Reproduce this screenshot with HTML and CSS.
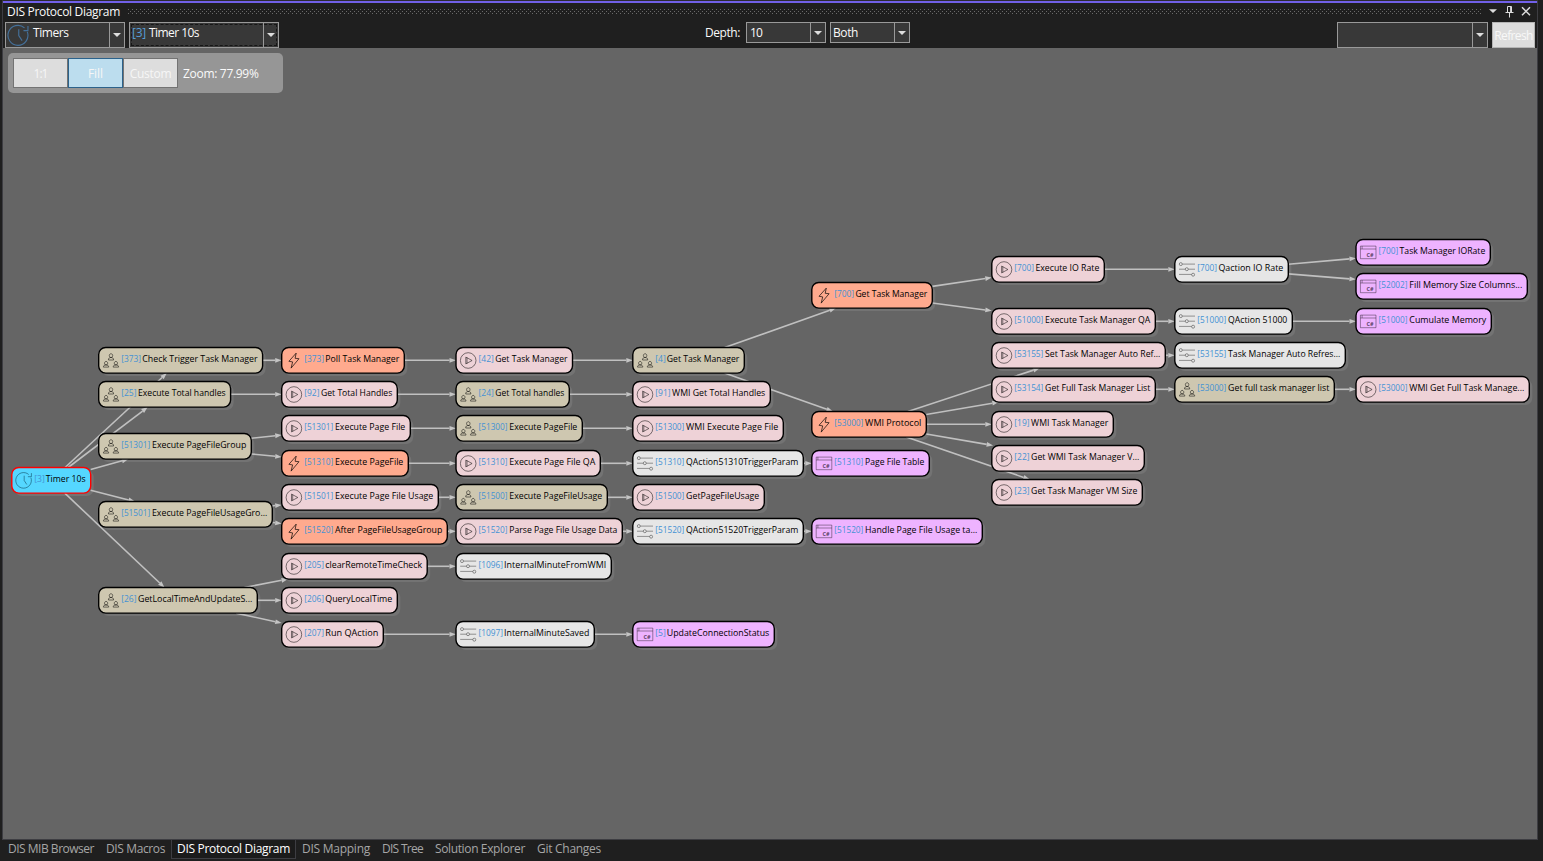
FILE: index.html
```html
<!DOCTYPE html>
<html lang="en">
<head>
<meta charset="utf-8">
<title>DIS Protocol Diagram</title>
<link rel="stylesheet" href="styles.css">
</head>
<body>
<svg class="defs" aria-hidden="true">
  <symbol id="timer" viewBox="0 0 18 18">
    <path d="M15.9 6.2A7.8 7.8 0 1 1 13.7 3M9.2 4.2V9l2.6 4M16.4 1.6v3.6h-3.5"/>
  </symbol>
  <symbol id="group" viewBox="0 0 18 18">
    <path d="M9.1 2.2a1.7 1.9 0 1 1-.01 0zM6.5 8.5c0-1.9 1-2.5 2.6-2.5s2.6.6 2.6 2.5zM4.2 9.9a1.6 1.8 0 1 1-.01 0zM1.5 15.6c0-1.6 1-2.2 2.6-2.2s2.7.6 2.7 2.2zM14 9.9a1.6 1.8 0 1 1-.01 0zM11.3 15.6c0-1.6 1-2.2 2.7-2.2s2.7.6 2.7 2.2z"/>
  </symbol>
  <symbol id="bolt" viewBox="0 0 18 18">
    <path d="M11.3 1.6 4 9.8l3.7.6-1.5 6.2 7.9-9.4-3.9-.4z"/>
  </symbol>
  <symbol id="play" viewBox="0 0 18 18">
    <circle cx="9" cy="9" r="7.8"/><path d="M6.6 5.6v6.8L12.9 9zM7.8 6v6"/>
  </symbol>
  <symbol id="param" viewBox="0 0 18 18">
    <path d="M4.4 3.6H17M1 8.7h6.2M10.4 8.7H17M1 13.9h12.5"/>
    <circle cx="2.8" cy="3.6" r="1.5"/><circle cx="8.8" cy="8.7" r="1.5"/><circle cx="15.1" cy="14.2" r="1.5"/>
  </symbol>
  <symbol id="code" viewBox="0 0 18 18">
    <path d="M1.2 2.6h15.6v12.6H1.2zM1.2 5.5h15.6M2.9 2.6v2.8"/>
  </symbol>
</svg>
<div class="window">
  <header class="titlebar">
    <span class="title" data-w="113">DIS Protocol Diagram</span>
    <span class="grip"></span>
    <svg class="title-icons" viewBox="0 0 50 18">
      <path class="solid" d="M2 7.2h8L6 11z"/>
      <path d="M20.5 4.5h4v6h-4zM23.6 4.5v6M18.5 10.5h8M22.5 10.5v5"/>
      <path class="cross" d="M35 5.2 43 13.2M43 5.2 35 13.2"/>
    </svg>
  </header>
  <div class="toolbar">
    <div class="left">
      <div class="combo tall timers"><svg class="combo-icon"><use href="#timer"/></svg><span class="value" data-w="35.5">Timers</span><i class="drop"></i></div>
      <div class="combo tall focused"><span class="value"><b data-w="14">[3]</b><span data-w="50">Timer 10s</span></span><i class="drop"></i></div>
    </div>
    <div class="middle">
      <span class="depth" data-w="35">Depth:</span>
      <div class="combo"><span class="value" data-w="12">10</span><i class="drop"></i></div>
      <div class="combo"><span class="value both" data-w="25">Both</span><i class="drop"></i></div>
    </div>
    <div class="right">
      <div class="combo tall search"><span class="value"></span><i class="drop"></i></div>
      <button class="refresh"><span data-w="38.5">Refresh</span></button>
    </div>
  </div>
  <main class="canvas">
    <svg class="diagram" id="diagram" viewBox="3 48 1534 791"></svg>
    <div class="zoombar">
      <button><span data-w="14">1:1</span></button><button class="active"><span data-w="15">Fill</span></button><button><span data-w="41.5">Custom</span></button>
      <span class="zoom" data-w="75.5">Zoom: 77.99%</span>
    </div>
  </main>
</div>
<nav class="tabs">
  <span><em data-w="86">DIS MIB Browser</em></span>
  <span><em data-w="59">DIS Macros</em></span>
  <span class="current"><em data-w="113">DIS Protocol Diagram</em></span>
  <span><em data-w="68">DIS Mapping</em></span>
  <span><em data-w="41">DIS Tree</em></span>
  <span><em data-w="90">Solution Explorer</em></span>
  <span><em data-w="64">Git Changes</em></span>
</nav>
<script src="script.js"></script>
</body>
</html>
```
FILE: styles.css
```css
* { box-sizing: border-box; }
body {
  margin: 0;
  height: 861px;
  overflow: hidden;
  display: flex;
  flex-direction: column;
  background: #1f1f1f;
  color: #fafafa;
  font: 12px/16px "Open Sans", "Noto Sans", sans-serif;
}
.defs { position: absolute; width: 0; height: 0; }
symbol { fill: none; }
[data-w] { white-space: pre; }
.window {
  height: 840px;
  margin: 0 5px 0 2px;
  border: 1px solid #3d3d42;
  border-top-color: #2b2b30;
  flex: none;
  display: flex;
  flex-direction: column;
}
.titlebar {
  height: 20px;
  border-top: 2px solid #7160e8;
  padding: 1px 0 0 4px;
  display: flex;
}
.title { width: 121px; flex: none; }
.grip {
  flex: none;
  width: 1354px;
  height: 5px;
  margin: 5px 5px 0 0;
  background:
    radial-gradient(circle at 0.5px 0.5px, #6a6a6a 0.6px, transparent 0.7px) 0 0 / 4px 4px,
    radial-gradient(circle at 2.5px 2.5px, #6a6a6a 0.6px, transparent 0.7px) 0 0 / 4px 4px;
}
.title-icons { width: 50px; height: 18px; margin-top: -2px; fill: none; stroke: #ddd; flex: none; }
.title-icons .solid { fill: #ddd; stroke: none; }
.title-icons .cross { stroke-width: 1.5; }
.toolbar {
  flex: none;
  height: 27px;
  padding: 1px 2px 0;
  display: grid;
  grid-template-columns: 700px 1fr auto;
}
.left, .middle, .right { display: flex; gap: 4px; align-items: flex-start; }
.depth { width: 37px; margin-top: 3px; }
.combo {
  width: 80px;
  height: 21px;
  border: 1px solid #999;
  background: #383838;
  display: flex;
}
.combo.tall { height: 26px; }
.combo.timers { width: 120px; }
.combo.focused { width: 150px; outline: 1px dashed #161616; outline-offset: -3px; }
.combo.search { width: 151px; }
.combo-icon { width: 23px; height: 23px; margin: 1px 1px 0 1px; stroke: #44709a; stroke-width: 0.9; flex: none; }
.value { flex: 1; padding-left: 2px; margin-top: 2px; }
.middle .value { padding-left: 3px; }
.middle .both { padding-left: 2px; }
.value b { font-weight: 400; color: #569cd6; margin-right: 3px; }
.drop { width: 15px; border-left: 1px solid #999; display: flex; justify-content: center; }
.drop::before {
  content: "";
  margin-top: 8px;
  width: 8px;
  height: 4px;
  background: #ddd;
  clip-path: polygon(0 0, 100% 0, 50% 100%);
}
.tall .drop::before { margin-top: 10px; }
.refresh {
  width: 43px;
  height: 26px;
  border: 1px solid #b5b5b5;
  background: #ddd;
  color: #f8f8f8;
  padding: 2px 0 0;
  font: inherit;
}
.canvas { position: relative; flex: 1; background: #656565; padding: 5px; }
.zoombar {
  position: absolute;
  left: 5px;
  top: 5px;
  width: 275px;
  height: 40px;
  border-radius: 5px;
  background: #969696;
  padding: 5px;
  display: flex;
}
.zoombar button {
  width: 55px;
  height: 30px;
  padding: 1px 0 0;
  border: 1px solid #737373;
  background: #ddd;
  color: #f6f6f6;
  font: inherit;
}
.zoombar button.active { background: #bcddee; border-color: #2c628b; }
.zoom { margin: 8px 0 0 5px; }
.diagram { position: absolute; left: 0; top: 0; width: 1534px; height: 791px; }
.edge { stroke: #c0c0c0; stroke-width: 1.6; }
.head { fill: #c4c4c4; }
.shadow { fill: #737373; }
.box { stroke: #000; stroke-width: 1.4; }
.box.timer { fill: #55d7ff; stroke: #f00; }
.box.group { fill: #cec7b0; }
.box.bolt { fill: #ffaa8e; }
.box.play { fill: #eed2d7; }
.box.param { fill: #e6e6e6; }
.box.code { fill: #eeb3ff; }
.icon { stroke: #000; stroke-opacity: 0.6; stroke-width: 0.85; }
.icon.bolt { stroke-opacity: 0.8; }
.icon.timer { stroke: #06354a; }
.icon.code, .icon.param { stroke-opacity: 0.45; }
.diagram text { font-size: 9.5px; fill: #000; }
.diagram .id { fill: #4492d4; }
.diagram .sharp { font-size: 5.5px; font-weight: 700; fill: #5e4466; }
.tabs { display: flex; height: 19px; padding-left: 2px; color: #a6a6a6; }
.tabs span { padding: 1px 5px 0 5px; border: 1px solid transparent; border-top: 0; flex: none; }
.tabs .current { background: #1b1b1b; border-color: #3d3d42; color: #fff; }
.tabs em { font-style: normal; }
```
FILE: script.js
```
const columns = [11.8, 98.7, 281.7, 456, 632.8, 811.8, 991.8, 1174.8, 1356];

// key: [column, top, right edge, icon kind, id, label]
const nodes = {
  t: [0, 467.5, 90.7, 'timer', 3, 'Timer 10s'],
  g373: [1, 347.5, 262.6, 'group', 373, 'Check Trigger Task Manager'],
  g25: [1, 381.5, 230.6, 'group', 25, 'Execute Total handles'],
  g301: [1, 433.5, 251.3, 'group', 51301, 'Execute PageFileGroup'],
  g501: [1, 501.5, 272.3, 'group', 51501, 'Execute PageFileUsageGro...'],
  g26: [1, 587.5, 257.3, 'group', 26, 'GetLocalTimeAndUpdateS...'],
  b373: [2, 347.5, 404.3, 'bolt', 373, 'Poll Task Manager'],
  p92: [2, 381.5, 397.3, 'play', 92, 'Get Total Handles'],
  p301: [2, 415.5, 410.3, 'play', 51301, 'Execute Page File'],
  b310: [2, 450.5, 408.3, 'bolt', 51310, 'Execute PageFile'],
  p501: [2, 484.5, 438.3, 'play', 51501, 'Execute Page File Usage'],
  b520: [2, 518.5, 447.3, 'bolt', 51520, 'After PageFileUsageGroup'],
  p205: [2, 553.5, 427.2, 'play', 205, 'clearRemoteTimeCheck'],
  p206: [2, 587.5, 397.3, 'play', 206, 'QueryLocalTime'],
  p207: [2, 621.5, 383.3, 'play', 207, 'Run QAction'],
  p42: [3, 347.5, 572.5, 'play', 42, 'Get Task Manager'],
  g24: [3, 381.5, 569.3, 'group', 24, 'Get Total handles'],
  g300: [3, 415.5, 582.3, 'group', 51300, 'Execute PageFile'],
  p310: [3, 450.5, 600.3, 'play', 51310, 'Execute Page File QA'],
  g500: [3, 484.5, 607.3, 'group', 51500, 'Execute PageFileUsage'],
  p520: [3, 518.5, 622.3, 'play', 51520, 'Parse Page File Usage Data'],
  m1096: [3, 553.5, 611.3, 'param', 1096, 'InternalMinuteFromWMI'],
  m1097: [3, 621.5, 594.3, 'param', 1097, 'InternalMinuteSaved'],
  g4: [4, 347.5, 744.3, 'group', 4, 'Get Task Manager'],
  p91: [4, 381.5, 770.3, 'play', 91, 'WMI Get Total Handles'],
  p300: [4, 415.5, 783.3, 'play', 51300, 'WMI Execute Page File'],
  m310: [4, 450.5, 803.3, 'param', 51310, 'QAction51310TriggerParam'],
  p500: [4, 484.5, 764.3, 'play', 51500, 'GetPageFileUsage'],
  m520: [4, 518.5, 803.3, 'param', 51520, 'QAction51520TriggerParam'],
  c5: [4, 621.5, 774.3, 'code', 5, 'UpdateConnectionStatus'],
  b700: [5, 282.5, 932.3, 'bolt', 700, 'Get Task Manager'],
  b53: [5, 411.5, 926.3, 'bolt', 53000, 'WMI Protocol'],
  c310: [5, 450.5, 929.3, 'code', 51310, 'Page File Table'],
  c520: [5, 518.5, 982.3, 'code', 51520, 'Handle Page File Usage ta...'],
  p700: [6, 256.5, 1104.3, 'play', 700, 'Execute IO Rate'],
  p510: [6, 308.5, 1155.3, 'play', 51000, 'Execute Task Manager QA'],
  p155: [6, 342.5, 1165.3, 'play', 53155, 'Set Task Manager Auto Ref...'],
  p154: [6, 376.5, 1155.3, 'play', 53154, 'Get Full Task Manager List'],
  p19: [6, 411.5, 1113.3, 'play', 19, 'WMI Task Manager'],
  p22: [6, 445.5, 1144.3, 'play', 22, 'Get WMI Task Manager V...'],
  p23: [6, 479.5, 1142.3, 'play', 23, 'Get Task Manager VM Size'],
  m700: [7, 256.5, 1288.3, 'param', 700, 'Qaction IO Rate'],
  m510: [7, 308.5, 1292.3, 'param', 51000, 'QAction 51000'],
  m155: [7, 342.5, 1345.3, 'param', 53155, 'Task Manager Auto Refres...'],
  g530: [7, 376.5, 1334.3, 'group', 53000, 'Get full task manager list'],
  c700: [8, 239.5, 1490.3, 'code', 700, 'Task Manager IORate'],
  c520b: [8, 273.5, 1527.3, 'code', 52002, 'Fill Memory Size Columns...'],
  c510: [8, 308.5, 1491.3, 'code', 51000, 'Cumulate Memory'],
  p530: [8, 376.5, 1529.3, 'play', 53000, 'WMI Get Full Task Manage...']
};

const edges = `t g373,t g25,t g301,t g501,t g26,g373 b373,g25 p92,g301 p301,g301 b310,g501 p501,g501 b520,
g26 p205,g26 p206,g26 p207,b373 p42,p92 g24,p301 g300,b310 p310,p501 g500,b520 p520,p205 m1096,p207 m1097,
p42 g4,g24 p91,g300 p300,p310 m310,g500 p500,p520 m520,m1097 c5,g4 b700,g4 b53,m310 c310,m520 c520,
b700 p700,b700 p510,b53 p155,b53 p154,b53 p19,b53 p22,b53 p23,p700 m700,p510 m510,p155 m155,p154 g530,
m700 c700,m700 c520b,m510 c510,g530 p530`.split(',').map(e => e.trim().split(' '));

const H = 25.6;
const labelOffset = [0, 34, 39.3, 43.6, 48.1, 53.3];
const idWidth = [0, 10.5, 15.3, 19.8, 24.5, 29];

function rect(key) {
  const [c, y, right] = nodes[key];
  const x = columns[c];
  return { x, y, w: right - x, cx: (x + right) / 2, cy: y + H / 2 };
}

// Distance from a node's centre to its border along the direction (dx, dy)
function reach(r, dx, dy) {
  return Math.min(r.w / 2 / Math.abs(dx || 1e-9), H / 2 / Math.abs(dy || 1e-9));
}

let shadows = '', lines = '', boxes = '';
for (const [from, to] of edges) {
  const a = rect(from), b = rect(to);
  const len = Math.hypot(b.cx - a.cx, b.cy - a.cy);
  const dx = (b.cx - a.cx) / len, dy = (b.cy - a.cy) / len;
  const s = reach(a, dx, dy), e = reach(b, dx, dy);
  const x2 = b.cx - dx * e, y2 = b.cy - dy * e;
  const hx = x2 - dx * 6.5, hy = y2 - dy * 6.5;
  lines += `<path class="edge" d="M${a.cx + dx * s} ${a.cy + dy * s}L${hx} ${hy}"/>` +
    `<path class="head" d="M${x2} ${y2}L${hx - dy * 2.4} ${hy + dx * 2.4}L${hx + dy * 2.4} ${hy - dx * 2.4}z"/>`;
}
for (const key in nodes) {
  const [, , right, kind, id, label] = nodes[key];
  const { x, y, w } = rect(key);
  const n = String(id).length, tx = x + labelOffset[n];
  shadows += `<rect class="shadow" x="${x + 3}" y="${y + 3}" width="${w}" height="${H}" rx="7"/>`;
  boxes += `<rect class="box ${kind}" x="${x}" y="${y}" width="${w}" height="${H}" rx="7"/>` +
    `<use class="icon ${kind}" href="#${kind}" x="${x + 3.2}" y="${y + 4}" width="18" height="18"/>` +
    (kind === 'code' ? `<text class="sharp" x="${x + 10.6}" y="${y + 17.3}">C#</text>` : '') +
    `<text class="id" x="${x + 22.5}" y="${y + 14.7}" textLength="${idWidth[n]}" lengthAdjust="spacingAndGlyphs">[${id}]</text>` +
    `<text x="${tx}" y="${y + 14.7}" textLength="${right - 5 - tx}" lengthAdjust="spacingAndGlyphs">${label}</text>`;
}
document.getElementById('diagram').innerHTML = shadows + lines + boxes;

document.querySelectorAll('[data-w]').forEach(el => {
  const range = document.createRange();
  range.selectNodeContents(el);
  const natural = range.getBoundingClientRect().width;
  el.style.letterSpacing = (el.dataset.w - natural) / el.textContent.length + 'px';
});
```
